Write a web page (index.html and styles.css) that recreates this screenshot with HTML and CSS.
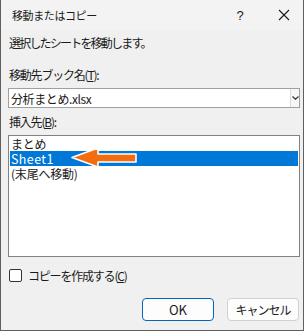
FILE: index.html
```html
<!DOCTYPE html>
<html lang="ja">
<head>
    <meta charset="UTF-8">
    <title>移動またはコピー</title>
    <link rel="stylesheet" href="styles.css">
</head>
<body>
    <div class="dialog">
        <div class="titlebar">
            <span class="title">移動またはコピー</span>
            <span class="help">?</span>
            <span class="close">
                <svg width="12" height="12" viewBox="0 0 12 12"><path d="M1 1L11 11M11 1L1 11" stroke="#1a1a1a" stroke-width="1.1"/></svg>
            </span>
        </div>
        <div class="content">
            <p class="intro">選択したシートを移動します。</p>
            <label class="caption first">移動先ブック名(<u>T</u>):</label>
            <div class="combo">
                <span class="combo-text">分析まとめ.xlsx</span>
                <span class="combo-btn">
                    <svg width="7" height="4" viewBox="0 0 7 4"><path d="M0.5 0.5L3.5 3.2L6.5 0.5" stroke="#333" stroke-width="1.2" fill="none"/></svg>
                </span>
            </div>
            <label class="caption">挿入先(<u>B</u>):</label>
            <div class="listbox">
                <div class="item">まとめ</div>
                <div class="item selected">Sheet1
                    <svg class="arrow" width="70" height="24" viewBox="0 0 70 24">
                        <path d="M2 11.5L28 2V8H66V16H28V21Z" fill="#f36c10" stroke="#fff" stroke-width="1.6" stroke-linejoin="round"/>
                    </svg>
                </div>
                <div class="item">(末尾へ移動)</div>
            </div>
            <div class="check">
                <span class="box"></span>
                <span>コピーを作成する(<u>C</u>)</span>
            </div>
            <div class="buttons">
                <button class="btn primary">OK</button>
                <button class="btn">キャンセル</button>
            </div>
        </div>
    </div>
</body>
</html>
```

FILE: styles.css
```css
body {
    margin: 0;
    font-family: "Noto Sans CJK JP", "Noto Sans", sans-serif;
    font-size: 11px;
    color: #1a1a1a;
    background: #f0f0f0;
}
.dialog {
    width: 302px;
    height: 330px;
    border: 1px solid #5f5f5f;
    border-top: none;
    background: #f0f0f0;
    display: flex;
    flex-direction: column;
}
.titlebar {
    height: 30px;
    background: #f3f3f3;
    display: flex;
    align-items: center;
    padding-left: 11px;
}
.title {
    flex: 1;
    font-size: 11px;
    letter-spacing: -0.4px;
}
.help {
    width: 16px;
    text-align: center;
    font-family: "Liberation Sans", sans-serif;
    font-size: 13px;
    margin-right: 30px;
}
.close {
    display: flex;
    margin-right: 13px;
}
.content {
    flex: 1;
    padding: 0 3px 0 7px;
    display: flex;
    flex-direction: column;
}
.intro {
    margin: 5px 0 0 1px;
    height: 16px;
    line-height: 16px;
    font-size: 12px;
    letter-spacing: -1.8px;
}
.caption {
    display: block;
    margin: 6px 0 0 1px;
    height: 16px;
    line-height: 16px;
    font-size: 12px;
    letter-spacing: -1.2px;
}
.caption.first {
    margin-top: 16px;
}
.combo {
    margin-top: 5px;
    height: 18px;
    border: 1px solid #a0a0a0;
    background: #fff;
    display: flex;
    align-items: center;
}
.combo-text {
    flex: 1;
    padding-left: 2px;
    font-size: 12px;
    letter-spacing: -0.4px;
}
.combo-btn {
    width: 8px;
    height: 18px;
    border-left: 1px solid #dadada;
    display: flex;
    align-items: center;
    justify-content: center;
    background: #f7f7f7;
}
.listbox {
    margin-top: 5px;
    height: 120px;
    border: 1px solid #828282;
    background: #fff;
    padding: 0 1px;
}
.item {
    height: 15px;
    line-height: 15px;
    padding-left: 1px;
    font-size: 12px;
    letter-spacing: -0.2px;
    position: relative;
}
.item.selected {
    background: #0078d7;
    color: #fff;
    font-size: 12.5px;
    letter-spacing: 0.4px;
}
.arrow {
    position: absolute;
    left: 60px;
    top: -5px;
}
.check {
    margin-top: 10px;
    height: 16px;
    display: flex;
    align-items: center;
    gap: 6px;
    font-size: 12px;
    letter-spacing: -1.2px;
    padding-left: 1px;
}
.box {
    width: 11px;
    height: 11px;
    border: 1px solid #333;
    border-radius: 2px;
    background: #fff;
}
.buttons {
    margin-top: 15px;
    display: flex;
    justify-content: flex-end;
    gap: 13px;
    padding-right: 1px;
}
.btn {
    width: 72px;
    height: 23px;
    border: 1px solid #d0d0d0;
    border-radius: 4px;
    background: #fdfdfd;
    font-family: "Noto Sans CJK JP", "Noto Sans", sans-serif;
    font-size: 12px;
    color: #1a1a1a;
    letter-spacing: -1px;
    padding: 0;
}
.btn.primary {
    border: 1px solid #0067c0;
    background: #fdfdfd;
    font-size: 13px;
    letter-spacing: 0;
}
```
